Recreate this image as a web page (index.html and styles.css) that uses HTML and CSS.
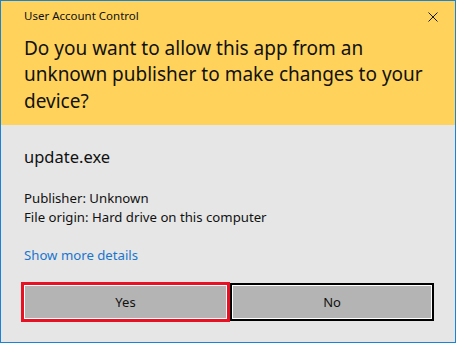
FILE: index.html
```html
<!DOCTYPE html>
<html lang="en">
<head>
  <meta charset="UTF-8" />
  <title>User Account Control</title>
  <link rel="stylesheet" href="styles.css">
</head>
<body>
  <div class="dialog">
    <div class="header">
      <div class="title-row">
        <span class="title">User Account Control</span>
        <svg class="close" width="10" height="10" viewBox="0 0 10 10">
          <path d="M0.5 0.5 L9.5 9.5 M9.5 0.5 L0.5 9.5" stroke="#1a1a1a" stroke-width="1" fill="none" />
        </svg>
      </div>
      <h1 class="question">Do you want to allow this app from an unknown publisher to make changes to your device?</h1>
    </div>
    <div class="content">
      <div class="app-name">update.exe</div>
      <div class="details">
        <div>Publisher: Unknown</div>
        <div>File origin: Hard drive on this computer</div>
      </div>
      <a class="more" href="#">Show more details</a>
      <div class="buttons">
        <button class="btn yes">Yes</button>
        <button class="btn no">No</button>
      </div>
    </div>
  </div>
</body>
</html>
```
FILE: styles.css
```css
body {
  margin: 0;
  font-family: 'Noto Sans', sans-serif;
  color: #000;
}

.dialog {
  width: 456px;
  height: 343px;
  box-sizing: border-box;
  border: 1px solid #1883d7;
  background: #e6e6e6;
}

.header {
  height: 124px;
  box-sizing: border-box;
  background: #ffd35b;
  padding: 6.5px 0 0 23px;
}

.title-row {
  display: flex;
  justify-content: space-between;
  align-items: flex-start;
  height: 16px;
}

.title {
  font-size: 11.5px;
  line-height: 16px;
  color: #111;
}

.close {
  margin: 4.5px 17px 0 0;
}

.question {
  margin: 11px 0 0;
  font-size: 19px;
  font-weight: normal;
  line-height: 26.5px;
  color: #111;
  width: 420px;
}

.content {
  padding: 20.6px 0 0 23px;
}

.app-name {
  font-size: 16.5px;
  line-height: 22px;
  color: #111;
}

.details {
  margin-top: 21px;
  font-size: 13.2px;
  line-height: 19.4px;
  color: #111;
}

.more {
  display: block;
  margin-top: 19px;
  font-size: 13.2px;
  line-height: 19.4px;
  color: #1a75ce;
  text-decoration: none;
  width: max-content;
}

.buttons {
  display: flex;
  align-items: center;
  margin: 16.4px 0 0 -3px;
}

.btn {
  font-family: 'Noto Sans', sans-serif;
  font-size: 13px;
  color: #111;
  background: #b4b4b4;
  box-shadow: inset 0 0 0 1px #fff;
  padding: 0;
  cursor: pointer;
}

.yes {
  width: 209px;
  height: 40px;
  border: 3px solid #e81123;
}

.no {
  width: 204px;
  height: 38px;
  border: 2px solid #000;
}
```
